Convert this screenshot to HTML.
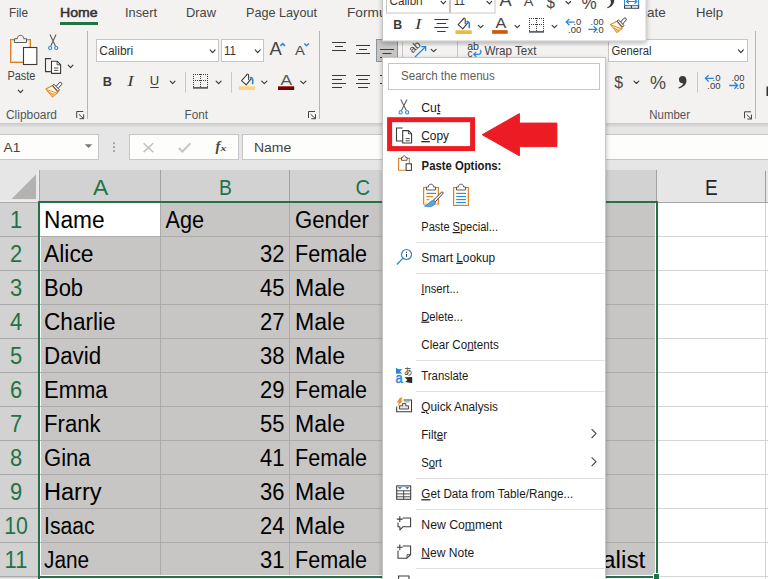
<!DOCTYPE html>
<html lang="en">
<head>
<meta charset="utf-8">
<title>Excel - Copy from context menu</title>
<style>
html,body{margin:0;padding:0;background:#fff;}
body{width:768px;height:579px;overflow:hidden;font-family:'Liberation Sans', sans-serif;}
svg{display:block;}
svg text{font-family:'Liberation Sans', sans-serif;white-space:pre;}
</style>
</head>
<body>
<svg width="768" height="579" viewBox="0 0 768 579">
<defs>
<linearGradient id="shd" x1="0" y1="0" x2="0" y2="1"><stop offset="0" stop-color="#c9c9c9"/><stop offset="1" stop-color="#e6e6e6"/></linearGradient>
<filter id="ds" x="-10%" y="-10%" width="120%" height="120%"><feGaussianBlur in="SourceAlpha" stdDeviation="2.5"/><feOffset dx="0" dy="1.5"/><feComponentTransfer><feFuncA type="linear" slope="0.28"/></feComponentTransfer><feMerge><feMergeNode/><feMergeNode in="SourceGraphic"/></feMerge></filter>
</defs>
<g id="ribbon">
<rect x="0" y="0" width="768" height="123" fill="#f3f2f1" />
<rect x="0" y="123" width="768" height="5" fill="url(#shd)" />
</g>
<g id="formula-bar">
<rect x="0" y="127" width="768" height="44" fill="#e6e6e6" />
<rect x="-1" y="134.5" width="99.5" height="25" fill="#fdfdfc" stroke="#c6c6c6" stroke-width="1" />
<text x="3.6" y="151.9" font-size="12.5" fill="#444" textLength="16.8" lengthAdjust="spacingAndGlyphs" >A1</text>
<path d="M84.8 144.2 h7.4 l-3.7 3.9 z" fill="#777" />
<rect x="113" y="142.3" width="1.9" height="1.9" fill="#a0a0a0" />
<rect x="113" y="146.2" width="1.9" height="1.9" fill="#a0a0a0" />
<rect x="113" y="150.1" width="1.9" height="1.9" fill="#a0a0a0" />
<rect x="129.5" y="134.5" width="109" height="25" fill="#fdfdfc" stroke="#c6c6c6" stroke-width="1" />
<path d="M143.6 143.2 l9.6 8.9 M153.2 143.2 l-9.6 8.9" fill="none" stroke="#c2c2c2" stroke-width="1.5" />
<path d="M178.8 148 l3.6 3.7 l8 -8.4" fill="none" stroke="#c2c2c2" stroke-width="1.9" />
<text x="215.4" y="151" font-size="14.5" fill="#444" font-weight="bold" font-style="italic" style="font-family:'Liberation Serif',serif">f</text>
<text x="220.6" y="151" font-size="9" fill="#444" font-weight="bold" font-style="italic" textLength="5.8" lengthAdjust="spacingAndGlyphs" style="font-family:'Liberation Serif',serif">x</text>
<rect x="242.5" y="134.5" width="530" height="25" fill="#fdfdfc" stroke="#c6c6c6" stroke-width="1" />
<text x="254" y="151.7" font-size="12.4" fill="#444" textLength="37.3" lengthAdjust="spacingAndGlyphs" >Name</text>
</g>
<g id="sheet">
<rect x="0" y="170" width="768" height="409" fill="#fff" />
<rect x="0" y="170" width="768" height="32" fill="#e6e6e6" />
<rect x="40" y="170" width="617" height="31" fill="#d2d2d2" />
<rect x="0" y="203" width="38" height="376" fill="#d2d2d2" />
<line x1="0" y1="202.5" x2="38" y2="202.5" stroke="#ababab" stroke-width="1" />
<rect x="0" y="200" width="38" height="2" fill="#ececec" />
<line x1="39.5" y1="170" x2="39.5" y2="201" stroke="#a6a6a6" stroke-width="1" />
<rect x="37" y="170" width="2" height="31" fill="#ececec" />
<line x1="658" y1="202.5" x2="768" y2="202.5" stroke="#a6a6a6" stroke-width="1" />
<line x1="765.5" y1="203" x2="765.5" y2="579" stroke="#d4d4d4" stroke-width="1" />
<rect x="0" y="578" width="38" height="1" fill="#e6e6e6" />
<path d="M11.6 199 L36 199 L36 174.4 Z" fill="#b4b2b0" />
<rect x="41" y="203" width="614" height="372" fill="#c8c6c4" />
<rect x="40" y="203" width="120" height="33" fill="#fff" />
<line x1="160.5" y1="170" x2="160.5" y2="201" stroke="#a3a3a3" stroke-width="1" />
<line x1="160.5" y1="203" x2="160.5" y2="575" stroke="#adabaa" stroke-width="1" />
<line x1="289.5" y1="170" x2="289.5" y2="201" stroke="#a3a3a3" stroke-width="1" />
<line x1="289.5" y1="203" x2="289.5" y2="575" stroke="#adabaa" stroke-width="1" />
<line x1="420.5" y1="170" x2="420.5" y2="201" stroke="#a3a3a3" stroke-width="1" />
<line x1="420.5" y1="203" x2="420.5" y2="575" stroke="#adabaa" stroke-width="1" />
<line x1="656.5" y1="170" x2="656.5" y2="201" stroke="#a3a3a3" stroke-width="1" />
<line x1="0" y1="236.5" x2="38" y2="236.5" stroke="#a8a8a8" stroke-width="1" />
<line x1="40" y1="236.5" x2="655" y2="236.5" stroke="#adabaa" stroke-width="1" />
<line x1="658" y1="236.5" x2="768" y2="236.5" stroke="#d4d4d4" stroke-width="1" />
<line x1="0" y1="270.5" x2="38" y2="270.5" stroke="#a8a8a8" stroke-width="1" />
<line x1="40" y1="270.5" x2="655" y2="270.5" stroke="#adabaa" stroke-width="1" />
<line x1="658" y1="270.5" x2="768" y2="270.5" stroke="#d4d4d4" stroke-width="1" />
<line x1="0" y1="304.5" x2="38" y2="304.5" stroke="#a8a8a8" stroke-width="1" />
<line x1="40" y1="304.5" x2="655" y2="304.5" stroke="#adabaa" stroke-width="1" />
<line x1="658" y1="304.5" x2="768" y2="304.5" stroke="#d4d4d4" stroke-width="1" />
<line x1="0" y1="338.5" x2="38" y2="338.5" stroke="#a8a8a8" stroke-width="1" />
<line x1="40" y1="338.5" x2="655" y2="338.5" stroke="#adabaa" stroke-width="1" />
<line x1="658" y1="338.5" x2="768" y2="338.5" stroke="#d4d4d4" stroke-width="1" />
<line x1="0" y1="372.5" x2="38" y2="372.5" stroke="#a8a8a8" stroke-width="1" />
<line x1="40" y1="372.5" x2="655" y2="372.5" stroke="#adabaa" stroke-width="1" />
<line x1="658" y1="372.5" x2="768" y2="372.5" stroke="#d4d4d4" stroke-width="1" />
<line x1="0" y1="406.5" x2="38" y2="406.5" stroke="#a8a8a8" stroke-width="1" />
<line x1="40" y1="406.5" x2="655" y2="406.5" stroke="#adabaa" stroke-width="1" />
<line x1="658" y1="406.5" x2="768" y2="406.5" stroke="#d4d4d4" stroke-width="1" />
<line x1="0" y1="440.5" x2="38" y2="440.5" stroke="#a8a8a8" stroke-width="1" />
<line x1="40" y1="440.5" x2="655" y2="440.5" stroke="#adabaa" stroke-width="1" />
<line x1="658" y1="440.5" x2="768" y2="440.5" stroke="#d4d4d4" stroke-width="1" />
<line x1="0" y1="474.5" x2="38" y2="474.5" stroke="#a8a8a8" stroke-width="1" />
<line x1="40" y1="474.5" x2="655" y2="474.5" stroke="#adabaa" stroke-width="1" />
<line x1="658" y1="474.5" x2="768" y2="474.5" stroke="#d4d4d4" stroke-width="1" />
<line x1="0" y1="508.5" x2="38" y2="508.5" stroke="#a8a8a8" stroke-width="1" />
<line x1="40" y1="508.5" x2="655" y2="508.5" stroke="#adabaa" stroke-width="1" />
<line x1="658" y1="508.5" x2="768" y2="508.5" stroke="#d4d4d4" stroke-width="1" />
<line x1="0" y1="542.5" x2="38" y2="542.5" stroke="#a8a8a8" stroke-width="1" />
<line x1="40" y1="542.5" x2="655" y2="542.5" stroke="#adabaa" stroke-width="1" />
<line x1="658" y1="542.5" x2="768" y2="542.5" stroke="#d4d4d4" stroke-width="1" />
<line x1="0" y1="576.5" x2="38" y2="576.5" stroke="#a8a8a8" stroke-width="1" />
<line x1="658" y1="576.5" x2="768" y2="576.5" stroke="#d4d4d4" stroke-width="1" />
<text x="93" y="194.5" font-size="22" fill="#217346" textLength="15.2" lengthAdjust="spacingAndGlyphs" >A</text>
<text x="218.9" y="194.5" font-size="22" fill="#217346" textLength="12.9" lengthAdjust="spacingAndGlyphs" >B</text>
<text x="355.6" y="194.5" font-size="22" fill="#217346" textLength="14.6" lengthAdjust="spacingAndGlyphs" >C</text>
<text x="704.9" y="194.6" font-size="22" fill="#262626" textLength="12.7" lengthAdjust="spacingAndGlyphs" >E</text>
<line x1="765.5" y1="171" x2="765.5" y2="202" stroke="#9f9f9f" stroke-width="1" />
<text x="10" y="227.8" font-size="23" fill="#217346" textLength="12.2" lengthAdjust="spacingAndGlyphs" >1</text>
<text x="10" y="261.8" font-size="23" fill="#217346" textLength="12.2" lengthAdjust="spacingAndGlyphs" >2</text>
<text x="10" y="295.8" font-size="23" fill="#217346" textLength="12.2" lengthAdjust="spacingAndGlyphs" >3</text>
<text x="10" y="329.8" font-size="23" fill="#217346" textLength="12.2" lengthAdjust="spacingAndGlyphs" >4</text>
<text x="10" y="363.8" font-size="23" fill="#217346" textLength="12.2" lengthAdjust="spacingAndGlyphs" >5</text>
<text x="10" y="397.8" font-size="23" fill="#217346" textLength="12.2" lengthAdjust="spacingAndGlyphs" >6</text>
<text x="10" y="431.8" font-size="23" fill="#217346" textLength="12.2" lengthAdjust="spacingAndGlyphs" >7</text>
<text x="10" y="465.8" font-size="23" fill="#217346" textLength="12.2" lengthAdjust="spacingAndGlyphs" >8</text>
<text x="10" y="499.8" font-size="23" fill="#217346" textLength="12.2" lengthAdjust="spacingAndGlyphs" >9</text>
<text x="4.2" y="533.8" font-size="23" fill="#217346" textLength="23.8" lengthAdjust="spacingAndGlyphs" >10</text>
<text x="4.6" y="567.8" font-size="23" fill="#217346" textLength="22.7" lengthAdjust="spacingAndGlyphs" >11</text>
<text x="44" y="227.8" font-size="23" fill="#000" textLength="60.6" lengthAdjust="spacingAndGlyphs" >Name</text>
<text x="165.5" y="227.8" font-size="23" fill="#000" textLength="38.5" lengthAdjust="spacingAndGlyphs" >Age</text>
<text x="295" y="227.8" font-size="23" fill="#000" textLength="74" lengthAdjust="spacingAndGlyphs" >Gender</text>
<text x="44" y="261.8" font-size="23" fill="#000" textLength="49.6" lengthAdjust="spacingAndGlyphs" >Alice</text>
<text x="260" y="261.8" font-size="23" fill="#000" textLength="24.5" lengthAdjust="spacingAndGlyphs" >32</text>
<text x="295" y="261.8" font-size="23" fill="#000" textLength="72" lengthAdjust="spacingAndGlyphs" >Female</text>
<text x="44" y="295.8" font-size="23" fill="#000" textLength="39.1" lengthAdjust="spacingAndGlyphs" >Bob</text>
<text x="260" y="295.8" font-size="23" fill="#000" textLength="24.5" lengthAdjust="spacingAndGlyphs" >45</text>
<text x="295" y="295.8" font-size="23" fill="#000" textLength="50" lengthAdjust="spacingAndGlyphs" >Male</text>
<text x="44" y="329.8" font-size="23" fill="#000" textLength="71.6" lengthAdjust="spacingAndGlyphs" >Charlie</text>
<text x="260" y="329.8" font-size="23" fill="#000" textLength="24.5" lengthAdjust="spacingAndGlyphs" >27</text>
<text x="295" y="329.8" font-size="23" fill="#000" textLength="50" lengthAdjust="spacingAndGlyphs" >Male</text>
<text x="44" y="363.8" font-size="23" fill="#000" textLength="57.1" lengthAdjust="spacingAndGlyphs" >David</text>
<text x="260" y="363.8" font-size="23" fill="#000" textLength="24.5" lengthAdjust="spacingAndGlyphs" >38</text>
<text x="295" y="363.8" font-size="23" fill="#000" textLength="50" lengthAdjust="spacingAndGlyphs" >Male</text>
<text x="44" y="397.8" font-size="23" fill="#000" textLength="63.6" lengthAdjust="spacingAndGlyphs" >Emma</text>
<text x="260" y="397.8" font-size="23" fill="#000" textLength="24.5" lengthAdjust="spacingAndGlyphs" >29</text>
<text x="295" y="397.8" font-size="23" fill="#000" textLength="72" lengthAdjust="spacingAndGlyphs" >Female</text>
<text x="44" y="431.8" font-size="23" fill="#000" textLength="56.6" lengthAdjust="spacingAndGlyphs" >Frank</text>
<text x="260" y="431.8" font-size="23" fill="#000" textLength="24.5" lengthAdjust="spacingAndGlyphs" >55</text>
<text x="295" y="431.8" font-size="23" fill="#000" textLength="50" lengthAdjust="spacingAndGlyphs" >Male</text>
<text x="44" y="465.8" font-size="23" fill="#000" textLength="46.6" lengthAdjust="spacingAndGlyphs" >Gina</text>
<text x="260" y="465.8" font-size="23" fill="#000" textLength="24.5" lengthAdjust="spacingAndGlyphs" >41</text>
<text x="295" y="465.8" font-size="23" fill="#000" textLength="72" lengthAdjust="spacingAndGlyphs" >Female</text>
<text x="44" y="499.8" font-size="23" fill="#000" textLength="57.6" lengthAdjust="spacingAndGlyphs" >Harry</text>
<text x="260" y="499.8" font-size="23" fill="#000" textLength="24.5" lengthAdjust="spacingAndGlyphs" >36</text>
<text x="295" y="499.8" font-size="23" fill="#000" textLength="50" lengthAdjust="spacingAndGlyphs" >Male</text>
<text x="44" y="533.8" font-size="23" fill="#000" textLength="50.6" lengthAdjust="spacingAndGlyphs" >Isaac</text>
<text x="260" y="533.8" font-size="23" fill="#000" textLength="24.5" lengthAdjust="spacingAndGlyphs" >24</text>
<text x="295" y="533.8" font-size="23" fill="#000" textLength="50" lengthAdjust="spacingAndGlyphs" >Male</text>
<text x="44" y="567.8" font-size="23" fill="#000" textLength="45.1" lengthAdjust="spacingAndGlyphs" >Jane</text>
<text x="260" y="567.8" font-size="23" fill="#000" textLength="24.5" lengthAdjust="spacingAndGlyphs" >31</text>
<text x="295" y="567.8" font-size="23" fill="#000" textLength="72" lengthAdjust="spacingAndGlyphs" >Female</text>
<text x="602" y="567.8" font-size="23" fill="#000" textLength="43.4" lengthAdjust="spacingAndGlyphs" >alist</text>
<rect x="38" y="201" width="620" height="2" fill="#217346" />
<rect x="38" y="201" width="2" height="378" fill="#217346" />
<rect x="656" y="201" width="2" height="372" fill="#217346" />
<rect x="38" y="576" width="616" height="2" fill="#217346" />
<rect x="653" y="573" width="7" height="6" fill="#fff" />
<rect x="654" y="574" width="5" height="5" fill="#217346" />
</g>
<g id="ribbon-tabs">
<text x="9" y="16.8" font-size="13.5" fill="#444" textLength="19" lengthAdjust="spacingAndGlyphs" >File</text>
<text x="60" y="16.8" font-size="13.5" fill="#333" textLength="37.5" lengthAdjust="spacingAndGlyphs" stroke="#333" stroke-width="0.55">Home</text>
<text x="125" y="16.8" font-size="13.5" fill="#444" textLength="32" lengthAdjust="spacingAndGlyphs" >Insert</text>
<text x="186" y="16.8" font-size="13.5" fill="#444" textLength="30" lengthAdjust="spacingAndGlyphs" >Draw</text>
<text x="246" y="16.8" font-size="13.5" fill="#444" textLength="71" lengthAdjust="spacingAndGlyphs" >Page Layout</text>
<text x="347" y="16.8" font-size="13.5" fill="#444" textLength="57" lengthAdjust="spacingAndGlyphs" >Formulas</text>
<text x="608" y="16.8" font-size="13.5" fill="#444" textLength="57.8" lengthAdjust="spacingAndGlyphs" >Automate</text>
<text x="696" y="16.8" font-size="13.5" fill="#444" textLength="27" lengthAdjust="spacingAndGlyphs" >Help</text>
<rect x="60" y="22" width="38" height="3" fill="#217346" />
</g>
<g id="ribbon-home">
<line x1="87.5" y1="31" x2="87.5" y2="119" stroke="#b8b5b2" stroke-width="1" />
<line x1="319.5" y1="31" x2="319.5" y2="119" stroke="#b8b5b2" stroke-width="1" />
<line x1="755.5" y1="31" x2="755.5" y2="119" stroke="#b8b5b2" stroke-width="1" />
<rect x="766.5" y="86.5" width="2" height="9.5" fill="#333" />
<text x="6" y="118.5" font-size="12" fill="#555" textLength="51" lengthAdjust="spacingAndGlyphs" >Clipboard</text>
<text x="184.6" y="118.5" font-size="12" fill="#555" textLength="23.4" lengthAdjust="spacingAndGlyphs" >Font</text>
<text x="649.3" y="118.5" font-size="12" fill="#555" textLength="40.7" lengthAdjust="spacingAndGlyphs" >Number</text>
<path d="M76.7 118 V111.5 H83.2 M78.9 114.3 L83.7 118.7 M83.7 114.3 V118.7 H79.5" fill="none" stroke="#444" stroke-width="1" />
<path d="M308.5 118 V111.5 H315 M310.7 114.3 L315.5 118.7 M315.5 114.3 V118.7 H311.3" fill="none" stroke="#444" stroke-width="1" />
<path d="M744.5 118.3 V111.8 H751 M746.7 114.6 L751.5 119.0 M751.5 114.6 V119.0 H747.3" fill="none" stroke="#444" stroke-width="1" />
<rect x="10.5" y="39.5" width="20" height="23" fill="#faf9f8" stroke="#d9822b" stroke-width="1" />
<rect x="11.5" y="40.5" width="18" height="21" fill="none" stroke="#f5c77e" stroke-width="1" />
<path d="M14.5 42.5 V38.7 H17.3 C17.3 34.2 23.7 34.2 23.7 38.7 H26.5 V42.5 Z" fill="#f3f2f1" stroke="#605e5c" stroke-width="1" />
<rect x="23.5" y="47.5" width="13.3" height="17" fill="#fff" stroke="#3b3a39" stroke-width="1.1" />
<text x="7.4" y="79.6" font-size="12" fill="#444" textLength="28.0" lengthAdjust="spacingAndGlyphs" >Paste</text>
<path d="M18.2 90.1 L20.5 92.7 L22.8 90.1" fill="none" stroke="#3b3a39" stroke-width="1.15" stroke-linecap="round" stroke-linejoin="round"/>
<path d="M50 34.5 L55.5 46.3 M56 34.5 L50.7 46.3" fill="none" stroke="#605e5c" stroke-width="1.1" />
<circle cx="50.1" cy="48" r="1.55" fill="none" stroke="#2b88d8" stroke-width="1.1"/>
<circle cx="56.2" cy="48" r="1.55" fill="none" stroke="#2b88d8" stroke-width="1.1"/>
<path d="M51.2 58.6 H45.5 V71.6 H50.8" fill="none" stroke="#3b3a39" stroke-width="1.1" />
<path d="M51.5 61.3 H57.3 L60.6 64.6 V73.4 H51.5 Z" fill="#fff" stroke="#3b3a39" stroke-width="1.1" stroke-linejoin="round"/>
<path d="M57.1 61.5 V64.8 H60.4" fill="none" stroke="#3b3a39" stroke-width="0.9" />
<path d="M54 68 H58.4 M54 70.4 H58.4" fill="none" stroke="#3b3a39" stroke-width="0.9" />
<path d="M68.2 65.2 L70.55 67.7 L72.89999999999999 65.2" fill="none" stroke="#3b3a39" stroke-width="1.15" stroke-linecap="round" stroke-linejoin="round"/>
<g transform="translate(45.5 81.9)">
<path d="M0.4 7 L7 3.7 L12.3 10.6 L7 15 Z" fill="#fffaf2" stroke="#e08a1e" stroke-width="1.1" stroke-linejoin="round"/>
<path d="M4.2 10.6 L11 11.4 L7 14.6 Z" fill="#f9cf8a" />
<path d="M2 7.9 L11.2 11.2 M3.8 10.3 L8.8 13.3" fill="none" stroke="#e08a1e" stroke-width="0.9" />
<path d="M10.6 4.5 L14 0.7 A1.45 1.45 0 0 1 16.1 2.6 L12.7 6.5" fill="#fff" stroke="#3b3a39" stroke-width="1.0" />
<path d="M7 3.7 L8.5 2.4 L13.9 7.9 L12.5 9.6 Z" fill="#fff" stroke="#3b3a39" stroke-width="1.0" stroke-linejoin="round"/>
</g>
<rect x="96.5" y="39.5" width="122" height="22" fill="#fff" stroke="#c8c6c4" stroke-width="1" />
<text x="99.3" y="54.6" font-size="12" fill="#333" textLength="33.9" lengthAdjust="spacingAndGlyphs" >Calibri</text>
<path d="M210.1 49.9 L212.6 52.7 L215.1 49.9" fill="none" stroke="#3b3a39" stroke-width="1.15" stroke-linecap="round" stroke-linejoin="round"/>
<rect x="221.5" y="39.5" width="42" height="22" fill="#fff" stroke="#c8c6c4" stroke-width="1" />
<text x="224" y="54.8" font-size="12" fill="#333" textLength="12" lengthAdjust="spacingAndGlyphs" >11</text>
<path d="M255.20000000000002 49.9 L257.70000000000005 52.7 L260.20000000000005 49.9" fill="none" stroke="#3b3a39" stroke-width="1.15" stroke-linecap="round" stroke-linejoin="round"/>
<text x="269.4" y="54.8" font-size="17.6" fill="#484644" textLength="12.3" lengthAdjust="spacingAndGlyphs" >A</text>
<path d="M280.4 45.9 L282.7 43.6 L285 45.9" fill="none" stroke="#2b88d8" stroke-width="1.5" />
<text x="294.9" y="54.8" font-size="13.4" fill="#484644" textLength="9.9" lengthAdjust="spacingAndGlyphs" >A</text>
<path d="M304.3 43.5 L306.6 45.8 L308.9 43.5" fill="none" stroke="#2b88d8" stroke-width="1.5" />
<text x="102.8" y="85.6" font-size="13.6" fill="#3b3a39" font-weight="bold" textLength="9.2" lengthAdjust="spacingAndGlyphs" >B</text>
<text x="127.2" y="85.5" font-size="14" fill="#3b3a39" font-style="italic" textLength="6.4" lengthAdjust="spacingAndGlyphs" style="font-family:'Liberation Serif',serif">I</text>
<text x="149.8" y="85.4" font-size="12.6" fill="#3b3a39" textLength="9.4" lengthAdjust="spacingAndGlyphs" >U</text>
<line x1="150.3" y1="87.5" x2="158.7" y2="87.5" stroke="#3b3a39" stroke-width="1" />
<path d="M170.3 81.1 L172.65 83.60000000000001 L175.0 81.1" fill="none" stroke="#3b3a39" stroke-width="1.15" stroke-linecap="round" stroke-linejoin="round"/>
<line x1="185.5" y1="72" x2="185.5" y2="92.7" stroke="#c8c6c4" stroke-width="1" />
<path d="M193 74.5 H208 M193 80.5 H208" fill="none" stroke="#3b3a39" stroke-width="1" stroke-dasharray="1 1"/>
<path d="M193.5 74 V87 M207.5 74 V87 M200.5 74 V87" fill="none" stroke="#3b3a39" stroke-width="1" stroke-dasharray="1 1"/>
<line x1="193" y1="87.9" x2="208" y2="87.9" stroke="#3b3a39" stroke-width="1.4" />
<path d="M216.1 81.2 L218.6 83.7 L221.1 81.2" fill="none" stroke="#3b3a39" stroke-width="1.15" stroke-linecap="round" stroke-linejoin="round"/>
<line x1="231.5" y1="72" x2="231.5" y2="92.7" stroke="#c8c6c4" stroke-width="1" />
<g transform="translate(240.7 74.1)">
<path d="M5.7 1.3 L0.9 6.5 L5.5 10.8 L10.4 4.8 Z" fill="#fff" />
<path d="M5.7 1.3 L0.9 6.5 L5.5 10.8 L10.4 4.8" fill="none" stroke="#3b3a39" stroke-width="1.05" stroke-linejoin="round" stroke-linecap="round"/>
<path d="M5.7 1.3 C5.9 -0.4 7.9 -0.6 7.9 1.5 L7.95 5.6" fill="none" stroke="#3b3a39" stroke-width="1.05" stroke-linecap="round"/>
<path d="M9.7 3.5 C11.5 3 12.4 4.8 12 9.4" fill="none" stroke="#2b88d8" stroke-width="1.7" stroke-linecap="round"/>
</g>
<rect x="238.89999999999998" y="86.3" width="16.2" height="3.7" fill="#fcd581" />
<path d="M261.7 81.2 L264.3 83.7 L266.90000000000003 81.2" fill="none" stroke="#3b3a39" stroke-width="1.15" stroke-linecap="round" stroke-linejoin="round"/>
<text x="280.6" y="84.6" font-size="14.6" fill="#555" textLength="11.6" lengthAdjust="spacingAndGlyphs" >A</text>
<rect x="278" y="86.3" width="16.2" height="3.7" fill="#7a0000" />
<path d="M300.7 81.2 L303.3 83.7 L305.90000000000003 81.2" fill="none" stroke="#3b3a39" stroke-width="1.15" stroke-linecap="round" stroke-linejoin="round"/>
<line x1="332.0" y1="42.5" x2="346.0" y2="42.5" stroke="#3b3a39" stroke-width="1" />
<line x1="335.0" y1="46.5" x2="343.0" y2="46.5" stroke="#3b3a39" stroke-width="1" />
<line x1="332.0" y1="50.5" x2="346.0" y2="50.5" stroke="#3b3a39" stroke-width="1" />
<line x1="356.0" y1="45.5" x2="370.0" y2="45.5" stroke="#3b3a39" stroke-width="1" />
<line x1="359.0" y1="49.5" x2="367.0" y2="49.5" stroke="#3b3a39" stroke-width="1" />
<line x1="356.0" y1="53.5" x2="370.0" y2="53.5" stroke="#3b3a39" stroke-width="1" />
<rect x="376.5" y="39.5" width="21" height="22" fill="#c8c6c4" stroke="#8a949e" stroke-width="1" />
<line x1="380.0" y1="49.5" x2="394.0" y2="49.5" stroke="#3b3a39" stroke-width="1" />
<line x1="382.5" y1="53.5" x2="391.5" y2="53.5" stroke="#3b3a39" stroke-width="1" />
<line x1="380.0" y1="57.5" x2="394.0" y2="57.5" stroke="#3b3a39" stroke-width="1" />
<line x1="332" y1="75.5" x2="346" y2="75.5" stroke="#3b3a39" stroke-width="1" />
<line x1="332" y1="79.5" x2="342" y2="79.5" stroke="#3b3a39" stroke-width="1" />
<line x1="332" y1="83.5" x2="346" y2="83.5" stroke="#3b3a39" stroke-width="1" />
<line x1="332" y1="87.5" x2="342" y2="87.5" stroke="#3b3a39" stroke-width="1" />
<line x1="356.0" y1="75.5" x2="370.0" y2="75.5" stroke="#3b3a39" stroke-width="1" />
<line x1="358.0" y1="79.5" x2="368.0" y2="79.5" stroke="#3b3a39" stroke-width="1" />
<line x1="356.0" y1="83.5" x2="370.0" y2="83.5" stroke="#3b3a39" stroke-width="1" />
<line x1="358.0" y1="87.5" x2="368.0" y2="87.5" stroke="#3b3a39" stroke-width="1" />
<line x1="380" y1="75.5" x2="394" y2="75.5" stroke="#3b3a39" stroke-width="1" />
<line x1="384" y1="79.5" x2="394" y2="79.5" stroke="#3b3a39" stroke-width="1" />
<line x1="380" y1="83.5" x2="394" y2="83.5" stroke="#3b3a39" stroke-width="1" />
<line x1="384" y1="87.5" x2="394" y2="87.5" stroke="#3b3a39" stroke-width="1" />
<line x1="402.5" y1="41" x2="402.5" y2="60" stroke="#c8c6c4" stroke-width="1" />
<line x1="457.5" y1="41" x2="457.5" y2="60" stroke="#c8c6c4" stroke-width="1" />
<g transform="translate(412.6 53.4) rotate(-42)">
<text x="0" y="0" font-size="10.4" fill="#3b3a39" textLength="11.8" lengthAdjust="spacingAndGlyphs" >ab</text>
</g>
<path d="M415 57 L425.5 46.7 M421.2 46.6 H425.7 V51" fill="none" stroke="#2b88d8" stroke-width="1.25" />
<path d="M431.2 49.4 L433.65 51.7 L436.1 49.4" fill="none" stroke="#3b3a39" stroke-width="1.15" stroke-linecap="round" stroke-linejoin="round"/>
<text x="467.2" y="49.5" font-size="10" fill="#3b3a39" textLength="11.8" lengthAdjust="spacingAndGlyphs" >ab</text>
<text x="467.4" y="56.8" font-size="10" fill="#3b3a39" textLength="5.0" lengthAdjust="spacingAndGlyphs" >c</text>
<path d="M480.3 49.8 C481.6 51.6 481 54.2 478.6 54.3 H473.6 M476.3 51.9 L473.7 54.3 L476.3 56.8" fill="none" stroke="#2b88d8" stroke-width="1.25" />
<text x="484.4" y="54.6" font-size="12.4" fill="#444" textLength="52.0" lengthAdjust="spacingAndGlyphs" >Wrap Text</text>
<rect x="608.5" y="39.5" width="139" height="22" fill="#fff" stroke="#c8c6c4" stroke-width="1" />
<text x="611.4" y="54.6" font-size="12" fill="#333" textLength="40.0" lengthAdjust="spacingAndGlyphs" >General</text>
<path d="M738.4 49.9 L740.9 52.7 L743.4 49.9" fill="none" stroke="#3b3a39" stroke-width="1.15" stroke-linecap="round" stroke-linejoin="round"/>
<text x="614.2" y="88" font-size="17.4" fill="#484644" textLength="8.8" lengthAdjust="spacingAndGlyphs" >$</text>
<path d="M634.0 81.2 L636.4000000000001 83.5 L638.8000000000001 81.2" fill="none" stroke="#3b3a39" stroke-width="1.15" stroke-linecap="round" stroke-linejoin="round"/>
<text x="650" y="88.6" font-size="18.6" fill="#484644" textLength="16" lengthAdjust="spacingAndGlyphs" >%</text>
<path d="M682.6 76 a3.6 3.6 0 1 1 0 7.2 a3.6 3.6 0 1 1 0 -7.2 z M685.8 78 C687.8 82 685.6 86.6 678.8 88.5 L678.4 87.6 C682.4 86 684 83.6 683.2 81 Z" fill="#3b3a39" />
<line x1="697.5" y1="72.2" x2="697.5" y2="92.6" stroke="#c8c6c4" stroke-width="1" />
<path d="M705.4 78.30000000000001 H713.8 M708.5999999999999 75.10000000000001 L705.4 78.30000000000001 L708.5999999999999 81.5" fill="none" stroke="#2b88d8" stroke-width="1.3" />
<text x="712.5" y="80.80000000000001" font-size="9.8" fill="#3b3a39" textLength="8.0" lengthAdjust="spacingAndGlyphs" >.0</text>
<text x="707.3" y="89.0" font-size="9.8" fill="#3b3a39" textLength="13.2" lengthAdjust="spacingAndGlyphs" >.00</text>
<text x="731.4" y="80.80000000000001" font-size="9.8" fill="#3b3a39" textLength="13.0" lengthAdjust="spacingAndGlyphs" >.00</text>
<path d="M729.1999999999999 85.5 H737.5999999999999 M734.4 82.30000000000001 L737.5999999999999 85.5 L734.4 88.7" fill="none" stroke="#2b88d8" stroke-width="1.3" />
<text x="736.5999999999999" y="89.0" font-size="9.8" fill="#3b3a39" textLength="7.8" lengthAdjust="spacingAndGlyphs" >.0</text>
</g>
<g id="context-menu">
<rect x="382.5" y="57.5" width="223" height="540" fill="#fff" stroke="#c6c6c6" stroke-width="1" filter="url(#ds)"/>
<rect x="388.5" y="63.5" width="211" height="26" fill="#fff" stroke="#c8c6c4" stroke-width="1" />
<text x="401" y="80.2" font-size="12" fill="#605e5c" textLength="93.8" lengthAdjust="spacingAndGlyphs" >Search the menus</text>
<text x="421.3" y="112.1" font-size="12" fill="#1a1a1a" textLength="19.0" lengthAdjust="spacingAndGlyphs" >Cu<tspan text-decoration="underline">t</tspan></text>
<text x="421.3" y="140.1" font-size="12" fill="#1a1a1a" textLength="27.7" lengthAdjust="spacingAndGlyphs" ><tspan text-decoration="underline">C</tspan>opy</text>
<text x="421.3" y="231" font-size="12" fill="#1a1a1a" textLength="76.7" lengthAdjust="spacingAndGlyphs" >Paste <tspan text-decoration="underline">S</tspan>pecial...</text>
<text x="421.3" y="261.7" font-size="12" fill="#1a1a1a" textLength="73.9" lengthAdjust="spacingAndGlyphs" >Smart <tspan text-decoration="underline">L</tspan>ookup</text>
<text x="421.3" y="292.8" font-size="12" fill="#1a1a1a" textLength="37.5" lengthAdjust="spacingAndGlyphs" ><tspan text-decoration="underline">I</tspan>nsert...</text>
<text x="421.3" y="320.6" font-size="12" fill="#1a1a1a" textLength="41.5" lengthAdjust="spacingAndGlyphs" ><tspan text-decoration="underline">D</tspan>elete...</text>
<text x="421.3" y="348.7" font-size="12" fill="#1a1a1a" textLength="77.5" lengthAdjust="spacingAndGlyphs" >Clear Co<tspan text-decoration="underline">n</tspan>tents</text>
<text x="421.3" y="379.5" font-size="12" fill="#1a1a1a" textLength="46.9" lengthAdjust="spacingAndGlyphs" >Translate</text>
<text x="421.3" y="410.8" font-size="12" fill="#1a1a1a" textLength="76.7" lengthAdjust="spacingAndGlyphs" ><tspan text-decoration="underline">Q</tspan>uick Analysis</text>
<text x="421.3" y="438.6" font-size="12" fill="#1a1a1a" textLength="25.7" lengthAdjust="spacingAndGlyphs" >Filt<tspan text-decoration="underline">e</tspan>r</text>
<text x="421.3" y="466.6" font-size="12" fill="#1a1a1a" textLength="20.7" lengthAdjust="spacingAndGlyphs" >S<tspan text-decoration="underline">o</tspan>rt</text>
<text x="421.3" y="498.2" font-size="12" fill="#1a1a1a" textLength="151.9" lengthAdjust="spacingAndGlyphs" ><tspan text-decoration="underline">G</tspan>et Data from Table/Range...</text>
<text x="421.3" y="528.5" font-size="12" fill="#1a1a1a" textLength="80.9" lengthAdjust="spacingAndGlyphs" >New Co<tspan text-decoration="underline">m</tspan>ment</text>
<text x="421.3" y="556.7" font-size="12" fill="#1a1a1a" textLength="52.9" lengthAdjust="spacingAndGlyphs" ><tspan text-decoration="underline">N</tspan>ew Note</text>
<text x="421.6" y="169.8" font-size="12" fill="#1a1a1a" font-weight="bold" textLength="79.8" lengthAdjust="spacingAndGlyphs" >Paste Options:</text>
<line x1="416" y1="242.5" x2="604.5" y2="242.5" stroke="#e1dfdd" stroke-width="1" />
<line x1="416" y1="273.5" x2="604.5" y2="273.5" stroke="#e1dfdd" stroke-width="1" />
<line x1="416" y1="360.5" x2="604.5" y2="360.5" stroke="#e1dfdd" stroke-width="1" />
<line x1="416" y1="391.5" x2="604.5" y2="391.5" stroke="#e1dfdd" stroke-width="1" />
<line x1="416" y1="478.5" x2="604.5" y2="478.5" stroke="#e1dfdd" stroke-width="1" />
<line x1="416" y1="509.5" x2="604.5" y2="509.5" stroke="#e1dfdd" stroke-width="1" />
<line x1="416" y1="568.5" x2="604.5" y2="568.5" stroke="#e1dfdd" stroke-width="1" />
<path d="M591.6 429.2 L596 433.6 L591.6 438" fill="none" stroke="#444" stroke-width="1.1" />
<path d="M591.6 457.3 L596 461.7 L591.6 466.1" fill="none" stroke="#444" stroke-width="1.1" />
<path d="M400.8 99.6 L406.4 110.6 M407 99.6 L401.4 110.6" fill="none" stroke="#605e5c" stroke-width="1.1" />
<circle cx="400.6" cy="112.4" r="1.6" fill="none" stroke="#2b88d8" stroke-width="1.1"/>
<circle cx="407.2" cy="112.4" r="1.6" fill="none" stroke="#2b88d8" stroke-width="1.1"/>
<path d="M402.6 128 H396.5 V141 H402" fill="none" stroke="#3b3a39" stroke-width="1.1" />
<path d="M402.7 130.6 H408.6 L411.6 133.6 V143 H402.7 Z" fill="#fff" stroke="#3b3a39" stroke-width="1.1" stroke-linejoin="round"/>
<path d="M408.4 130.8 V133.8 H411.4" fill="none" stroke="#3b3a39" stroke-width="0.9" />
<path d="M405.6 138.6 H409.8 M405.6 140.8 H409.8" fill="none" stroke="#3b3a39" stroke-width="0.9" />
<path d="M405.6 170.3 H398.6 V158.4 H409.4 V163.4" fill="none" stroke="#d9822b" stroke-width="1.1" />
<path d="M401.5 160.3 V157.4 H402.9 C402.9 155.2 405.6 155.2 405.6 157.4 H407 V160.3 Z" fill="#fff" stroke="#605e5c" stroke-width="1" />
<rect x="406.1" y="163.8" width="5.3" height="6.6" fill="#fff" stroke="#3b3a39" stroke-width="1.05" />
<rect x="423.5" y="187.5" width="15" height="16.5" fill="#fffdfa" stroke="#d9822b" stroke-width="1" />
<rect x="424.5" y="188.5" width="13" height="14.5" fill="none" stroke="#fbe3c0" stroke-width="1" />
<path d="M426.5 190 V187 H428.4 C428.4 183.2 433.6 183.2 433.6 187 H435.5 V190 Z" fill="#fff" stroke="#605e5c" stroke-width="1" />
<line x1="426.4" y1="193.4" x2="436" y2="193.4" stroke="#2b88d8" stroke-width="1.1" />
<line x1="426.4" y1="196.6" x2="433.2" y2="196.6" stroke="#d9822b" stroke-width="1.1" />
<line x1="426.4" y1="199.7" x2="429.4" y2="199.7" stroke="#d9822b" stroke-width="1.1" />
<path d="M433.4 200.2 L441.4 192.3 C442.5 191.4 443.8 192.6 442.8 193.7 L435.2 201.9 Z" fill="#fff" stroke="#3b3a39" stroke-width="1" />
<path d="M435.4 201.9 C435.4 206 429.8 207.8 424.4 206 C428.2 205.2 429.4 201.4 433.2 200 Z" fill="#5ea2e0" stroke="#2b88d8" stroke-width="0.8" />
<rect x="453.5" y="187.5" width="15" height="18" fill="#fffdfa" stroke="#d9822b" stroke-width="1" />
<rect x="454.5" y="188.5" width="13" height="16" fill="none" stroke="#fbe3c0" stroke-width="1" />
<path d="M456.5 190 V187 H458.4 C458.4 183.2 463.6 183.2 463.6 187 H465.5 V190 Z" fill="#fff" stroke="#605e5c" stroke-width="1" />
<line x1="456.2" y1="193.4" x2="466" y2="193.4" stroke="#2b88d8" stroke-width="1.1" />
<line x1="456.2" y1="196.5" x2="466" y2="196.5" stroke="#2b88d8" stroke-width="1.1" />
<line x1="456.2" y1="199.6" x2="466" y2="199.6" stroke="#2b88d8" stroke-width="1.1" />
<line x1="456.2" y1="202.5" x2="466" y2="202.5" stroke="#2b88d8" stroke-width="1.1" />
<circle cx="406.5" cy="254.5" r="5" fill="none" stroke="#2b88d8" stroke-width="1.2"/>
<line x1="402.8" y1="258.4" x2="396.8" y2="264.5" stroke="#2b88d8" stroke-width="1.3" />
<rect x="406" y="251.9" width="1" height="1.1" fill="#3b3a39" />
<rect x="406" y="253.9" width="1" height="3" fill="#3b3a39" />
<path d="M396 368 H397.3 V369 L402.6 369.2 L400 371.3 L402.1 373.4 L396 373.8 Z" fill="#2b88d8" />
<text x="395.4" y="382.6" font-size="14" fill="#2b88d8" textLength="7.2" lengthAdjust="spacingAndGlyphs" stroke="#2b88d8" stroke-width="0.5">a</text>
<text x="403.8" y="375.2" font-size="9" fill="#2b2b2b" textLength="8.6" lengthAdjust="spacingAndGlyphs" style="font-family:'Liberation Sans','Noto Sans CJK JP',sans-serif">あ</text>
<path d="M412.2 377.1 V382.9 H410.9 L405.2 382 L407.4 379.9 L404.6 377.3 Z" fill="#2b2b2b" />
<path d="M403.6 399.9 H411.5 V411.8 H396.7 V406.6" fill="none" stroke="#3b3a39" stroke-width="1.05" />
<path d="M404 401.9 H409.6" fill="none" stroke="#8a8886" stroke-width="0.9" />
<path d="M399.5 409 V405.8 H402.6 V403.6 H405.8 V405.8 H408.6 V409 Z" fill="#e8e6e4" stroke="#3b3a39" stroke-width="0.9" />
<path d="M399.8 397.7 L402.8 397.7 L401 400.6 L402.8 400.6 L397.6 406.6 L398.9 402.4 L396.8 402.4 Z" fill="#e8912d" />
<rect x="396.7" y="485.9" width="14" height="13.4" fill="#fff" stroke="#3b3a39" stroke-width="1.05" />
<path d="M396.7 490.8 H410.7 M396.7 493.9 H410.7 M396.7 496.8 H410.7 M403.7 490.8 V499.3" fill="none" stroke="#3b3a39" stroke-width="0.9" />
<path d="M397.9 487 H402 L399.95 489.5 Z M405.2 487 H409.3 L407.25 489.5 Z" fill="#2b88d8" />
<path d="M402.8 518 H410.6 V526.7 H403 L399.9 530 V526.7 H398 V522.6" fill="none" stroke="#3b3a39" stroke-width="1.05" stroke-linejoin="round"/>
<path d="M399.8 516.2 V522 M396.9 519.1 H402.7" fill="none" stroke="#3b3a39" stroke-width="1.05" />
<path d="M402.8 546 H410.6 V554.6 L407 558.2 H398 V550.4" fill="none" stroke="#3b3a39" stroke-width="1.05" stroke-linejoin="round"/>
<path d="M410.4 554.7 H407 V558" fill="none" stroke="#3b3a39" stroke-width="0.9" />
<path d="M399.8 544.4 V550.2 M396.9 547.3 H402.7" fill="none" stroke="#3b3a39" stroke-width="1.05" />
<path d="M398.6 579 V576 H409 V579" fill="none" stroke="#3b3a39" stroke-width="1.05" />
</g>
<g id="mini-toolbar">
<rect x="382.5" y="-8" width="263.6" height="49" fill="#fff" stroke="#c6c6c6" stroke-width="1" filter="url(#ds)"/>
<rect x="386.5" y="-9" width="63" height="22" fill="#fff" stroke="#c8c6c4" stroke-width="1" />
<rect x="450.5" y="-9" width="44.5" height="22" fill="#fff" stroke="#c8c6c4" stroke-width="1" />
<text x="389.6" y="4.6" font-size="12" fill="#333" textLength="33.0" lengthAdjust="spacingAndGlyphs" >Calibri</text>
<path d="M441.09999999999997 1.3 L443.35 3.9000000000000004 L445.6 1.3" fill="none" stroke="#3b3a39" stroke-width="1.15" stroke-linecap="round" stroke-linejoin="round"/>
<text x="454" y="4.6" font-size="12" fill="#333" textLength="11" lengthAdjust="spacingAndGlyphs" >11</text>
<path d="M487.0 1.3 L489.35 3.9000000000000004 L491.70000000000005 1.3" fill="none" stroke="#3b3a39" stroke-width="1.15" stroke-linecap="round" stroke-linejoin="round"/>
<text x="499.5" y="6.3" font-size="17.6" fill="#484644" textLength="12.1" lengthAdjust="spacingAndGlyphs" >A</text>
<text x="523.7" y="6.3" font-size="13.4" fill="#484644" textLength="9.7" lengthAdjust="spacingAndGlyphs" >A</text>
<text x="546.6" y="7.8" font-size="17.4" fill="#484644" textLength="8.4" lengthAdjust="spacingAndGlyphs" >$</text>
<path d="M566.0 1.5 L568.3 3.9000000000000004 L570.6 1.5" fill="none" stroke="#3b3a39" stroke-width="1.15" stroke-linecap="round" stroke-linejoin="round"/>
<text x="581.6" y="9" font-size="18.6" fill="#484644" textLength="15.2" lengthAdjust="spacingAndGlyphs" >%</text>
<path d="M608.6 -1 H614.2 C614.7 3.4 612 7 607.4 8.3 L607 7.5 C610.2 6 611.6 3.4 610.6 0.4 Z" fill="#3b3a39" />
<path d="M624.6 -3 V5.6 H638.6 V-3" fill="none" stroke="#2b88d8" stroke-width="1.1" />
<path d="M624.6 5.6 V8.2 H638.6 V5.6 M631.4 5.6 V8.2" fill="none" stroke="#3b3a39" stroke-width="1.1" />
<path d="M626.6 1.5 H636.8 M628.8 -0.7 L626.6 1.5 L628.8 3.7 M634.6 -0.7 L636.8 1.5 L634.6 3.7" fill="none" stroke="#2b88d8" stroke-width="1.2" />
<text x="393.3" y="29.3" font-size="13.6" fill="#3b3a39" font-weight="bold" textLength="8.9" lengthAdjust="spacingAndGlyphs" >B</text>
<text x="415" y="29.2" font-size="14" fill="#3b3a39" font-style="italic" textLength="6.4" lengthAdjust="spacingAndGlyphs" style="font-family:'Liberation Serif',serif">I</text>
<line x1="434.4" y1="19.5" x2="448.4" y2="19.5" stroke="#3b3a39" stroke-width="1" />
<line x1="436.65" y1="23.5" x2="446.15" y2="23.5" stroke="#3b3a39" stroke-width="1" />
<line x1="434.4" y1="27.5" x2="448.4" y2="27.5" stroke="#3b3a39" stroke-width="1" />
<line x1="437.15" y1="31.5" x2="445.65" y2="31.5" stroke="#3b3a39" stroke-width="1" />
<g transform="translate(457.3 18.1)">
<path d="M5.7 1.3 L0.9 6.5 L5.5 10.8 L10.4 4.8 Z" fill="#fff" />
<path d="M5.7 1.3 L0.9 6.5 L5.5 10.8 L10.4 4.8" fill="none" stroke="#3b3a39" stroke-width="1.05" stroke-linejoin="round" stroke-linecap="round"/>
<path d="M5.7 1.3 C5.9 -0.4 7.9 -0.6 7.9 1.5 L7.95 5.6" fill="none" stroke="#3b3a39" stroke-width="1.05" stroke-linecap="round"/>
<path d="M9.7 3.5 C11.5 3 12.4 4.8 12 9.4" fill="none" stroke="#2b88d8" stroke-width="1.7" stroke-linecap="round"/>
</g>
<rect x="455.5" y="30.3" width="16.2" height="3.7" fill="#f0b840" />
<path d="M478.29999999999995 25.3 L480.65 27.7 L483.0 25.3" fill="none" stroke="#3b3a39" stroke-width="1.15" stroke-linecap="round" stroke-linejoin="round"/>
<text x="495.4" y="28.3" font-size="14.2" fill="#444" textLength="10.8" lengthAdjust="spacingAndGlyphs" >A</text>
<rect x="492.1" y="30.1" width="15.6" height="3.7" fill="#d05a0c" />
<path d="M515.0 25.3 L517.3 27.7 L519.6 25.3" fill="none" stroke="#3b3a39" stroke-width="1.15" stroke-linecap="round" stroke-linejoin="round"/>
<path d="M529 18.5 H544 M529 24.5 H544" fill="none" stroke="#3b3a39" stroke-width="1" stroke-dasharray="1 1"/>
<path d="M529.5 18 V31 M543.5 18 V31 M536.5 18 V31" fill="none" stroke="#3b3a39" stroke-width="1" stroke-dasharray="1 1"/>
<line x1="529" y1="31.9" x2="544" y2="31.9" stroke="#3b3a39" stroke-width="1.4" />
<path d="M552.1 25.3 L554.5 27.7 L556.9 25.3" fill="none" stroke="#3b3a39" stroke-width="1.15" stroke-linecap="round" stroke-linejoin="round"/>
<path d="M566.2 22.099999999999998 H574.6 M569.4 18.9 L566.2 22.099999999999998 L569.4 25.299999999999997" fill="none" stroke="#2b88d8" stroke-width="1.3" />
<text x="573.3000000000001" y="24.6" font-size="9.8" fill="#3b3a39" textLength="8.0" lengthAdjust="spacingAndGlyphs" >.0</text>
<text x="568.1" y="32.8" font-size="9.8" fill="#3b3a39" textLength="13.2" lengthAdjust="spacingAndGlyphs" >.00</text>
<text x="590.6" y="24.6" font-size="9.8" fill="#3b3a39" textLength="13.0" lengthAdjust="spacingAndGlyphs" >.00</text>
<path d="M588.4 29.299999999999997 H596.8 M593.6 26.1 L596.8 29.299999999999997 L593.6 32.5" fill="none" stroke="#2b88d8" stroke-width="1.3" />
<text x="595.8" y="32.8" font-size="9.8" fill="#3b3a39" textLength="7.8" lengthAdjust="spacingAndGlyphs" >.0</text>
<g transform="translate(610 17.5)">
<path d="M0.4 7 L7 3.7 L12.3 10.6 L7 15 Z" fill="#fffaf2" stroke="#e08a1e" stroke-width="1.1" stroke-linejoin="round"/>
<path d="M4.2 10.6 L11 11.4 L7 14.6 Z" fill="#f9cf8a" />
<path d="M2 7.9 L11.2 11.2 M3.8 10.3 L8.8 13.3" fill="none" stroke="#e08a1e" stroke-width="0.9" />
<path d="M10.6 4.5 L14 0.7 A1.45 1.45 0 0 1 16.1 2.6 L12.7 6.5" fill="#fff" stroke="#3b3a39" stroke-width="1.0" />
<path d="M7 3.7 L8.5 2.4 L13.9 7.9 L12.5 9.6 Z" fill="#fff" stroke="#3b3a39" stroke-width="1.0" stroke-linejoin="round"/>
</g>
</g>
<g id="annotation">
<rect x="389.6" y="119.7" width="83" height="28.9" fill="none" stroke="#ed1c24" stroke-width="5" />
<path d="M482.2 134.7 L519.4 113.6 L519.4 123.1 L556.9 123.1 L556.9 146.6 L519.4 146.6 L519.4 155.8 Z" fill="#ed1c24" stroke="#ed1c24" stroke-width="1" stroke-linejoin="round"/>
</g>
</svg>
</body>
</html>
